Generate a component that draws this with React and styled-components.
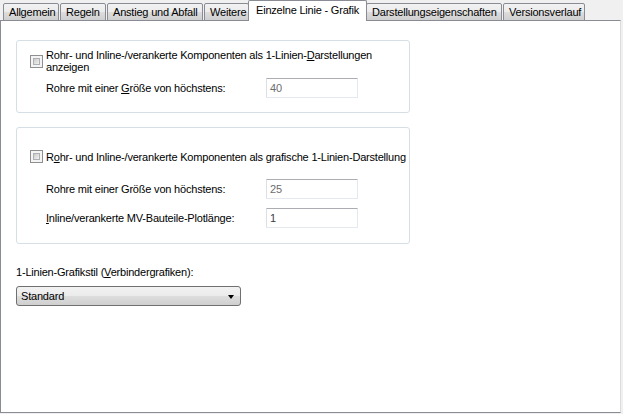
import React from "react";
import styled, { createGlobalStyle } from "styled-components";

const Global = createGlobalStyle`
  html, body { margin: 0; padding: 0; background: #f0f0f0; }
  body { font-family: "Liberation Sans", Arial, sans-serif; font-size: 11px; letter-spacing: -0.2px; color: #000; }
  #root { width: 623px; height: 414px; overflow: hidden; }
`;

const Window = styled.div`
  width: 623px;
  height: 414px;
  display: flex;
  flex-direction: column;
  background: #f0f0f0;
`;

const TabBar = styled.div`
  display: flex;
  align-items: flex-end;
  height: 21px;
  padding-left: 3px;
  position: relative;
  z-index: 2;
`;

const Tab = styled.div`
  box-sizing: border-box;
  width: ${(p) => p.$w}px;
  height: ${(p) => (p.$active ? 21 : 18)}px;
  margin: ${(p) => (p.$active ? "0 -1px 0 -2px" : "0 1px 0 0")};
  border: 1px solid #898c95;
  border-bottom: ${(p) => (p.$active ? "none" : "1px solid #898c95")};
  border-radius: 2px 2px 0 0;
  background: ${(p) =>
    p.$active ? "#fff" : "linear-gradient(#f2f2f2 0%, #ebebeb 50%, #dddddd 51%, #cfcfcf 100%)"};
  display: flex;
  align-items: ${(p) => (p.$active ? "flex-start" : "center")};
  padding: ${(p) => (p.$active ? "3px 0 0 7px" : "0 0 0 5px")};
  white-space: nowrap;
  font-size: 11px;
  line-height: 12px;
  position: relative;
  z-index: ${(p) => (p.$active ? 3 : 1)};
`;

const Panel = styled.div`
  box-sizing: border-box;
  width: 621px;
  height: 393px;
  margin-top: -1px;
  background: #fff;
  border: 1px solid #898c95;
  border-right-color: #dcdcdc;
  padding: 19px 15px 0 15px;
  display: flex;
  flex-direction: column;
`;

const Group = styled.div`
  box-sizing: border-box;
  width: 394px;
  height: ${(p) => p.$h}px;
  border: 1px solid #d5dfe5;
  border-radius: 3px;
  padding: ${(p) => p.$pt}px 0 0 13px;
  margin-bottom: ${(p) => p.$mb}px;
  display: flex;
  flex-direction: column;
`;

const CheckRow = styled.div`
  display: flex;
  align-items: center;
  gap: 3px;
`;

const Box = styled.span`
  box-sizing: border-box;
  flex: none;
  width: 13px;
  height: 13px;
  border: 1px solid #8e8f8f;
  background: #f4f4f4;
  padding: 2px;
  display: flex;
  &::after {
    content: "";
    flex: 1;
    border: 1px solid #aeb0b3;
    background: linear-gradient(135deg, #cbcbcb, #f1f1f1);
  }
`;

const CheckText = styled.span`
  line-height: 12px;
  width: ${(p) => (p.$wrap ? "332px" : "auto")};
  white-space: ${(p) => (p.$wrap ? "normal" : "nowrap")};
`;

const U = styled.span`
  text-decoration: underline;
`;

const FieldRow = styled.div`
  display: flex;
  align-items: center;
  padding-left: 16px;
  margin-top: ${(p) => p.$mt}px;
`;

const FieldLabel = styled.span`
  width: 220px;
  line-height: 12px;
`;

const Input = styled.div`
  box-sizing: border-box;
  width: 92px;
  height: 20px;
  border: 1px solid #abadb3;
  border-left-color: #dbdfe6;
  border-right-color: #e3e9ef;
  border-bottom-color: #e3e9ef;
  border-radius: 1px;
  background: #fff;
  color: ${(p) => p.$color || "#6d6d6d"};
  padding: 0 0 0 3px;
  display: flex;
  align-items: center;
  font-size: 11px;
`;

const StyleLabel = styled.div`
  line-height: 12px;
  margin-top: 22px;
`;

const Select = styled.div`
  box-sizing: border-box;
  width: 225px;
  height: 20px;
  margin-top: 8px;
  border: 1px solid #707070;
  border-radius: 3px;
  background: linear-gradient(#f2f2f2 0%, #ebebeb 50%, #dddddd 51%, #cfcfcf 100%);
  display: flex;
  align-items: center;
  justify-content: space-between;
  padding: 0 6px 0 4px;
`;

const Arrow = styled.span`
  width: 0;
  height: 0;
  border-left: 3.5px solid transparent;
  border-right: 3.5px solid transparent;
  border-top: 4px solid #000;
  margin-top: 1px;
`;

const tabs = [
  ["Allgemein", 56],
  ["Regeln", 46],
  ["Anstieg und Abfall", 96],
  ["Weitere", 45],
  ["Einzelne Linie - Grafik", 119, true],
  ["Darstellungseigenschaften", 136],
  ["Versionsverlauf", 82],
];

export default function App() {
  return (
    <Window>
      <Global />
      <TabBar>
        {tabs.map(([t, w, a]) => (
          <Tab key={t} $w={w} $active={a}>
            {t}
          </Tab>
        ))}
      </TabBar>
      <Panel>
        <Group $h={73} $pt={8} $mb={14}>
          <CheckRow>
            <Box />
            <CheckText $wrap>
              Rohr- und Inline-/verankerte Komponenten als 1-Linien-<U>D</U>arstellungen anzeigen
            </CheckText>
          </CheckRow>
          <FieldRow $mt={5}>
            <FieldLabel>
              Rohre mit einer <U>G</U>röße von höchstens:
            </FieldLabel>
            <Input>40</Input>
          </FieldRow>
        </Group>
        <Group $h={117} $pt={22} $mb={0}>
          <CheckRow>
            <Box />
            <CheckText>
              R<U>o</U>hr- und Inline-/verankerte Komponenten als grafische 1-Linien-Darstellung
            </CheckText>
          </CheckRow>
          <FieldRow $mt={16}>
            <FieldLabel>Rohre mit einer Größe von höchstens:</FieldLabel>
            <Input>25</Input>
          </FieldRow>
          <FieldRow $mt={9}>
            <FieldLabel>
              <U>I</U>nline/verankerte MV-Bauteile-Plotlänge:
            </FieldLabel>
            <Input $color="#3c3c3c">1</Input>
          </FieldRow>
        </Group>
        <StyleLabel>
          1-Linien-Grafikstil (<U>V</U>erbindergrafiken):
        </StyleLabel>
        <Select>
          <span>Standard</span>
          <Arrow />
        </Select>
      </Panel>
    </Window>
  );
}
